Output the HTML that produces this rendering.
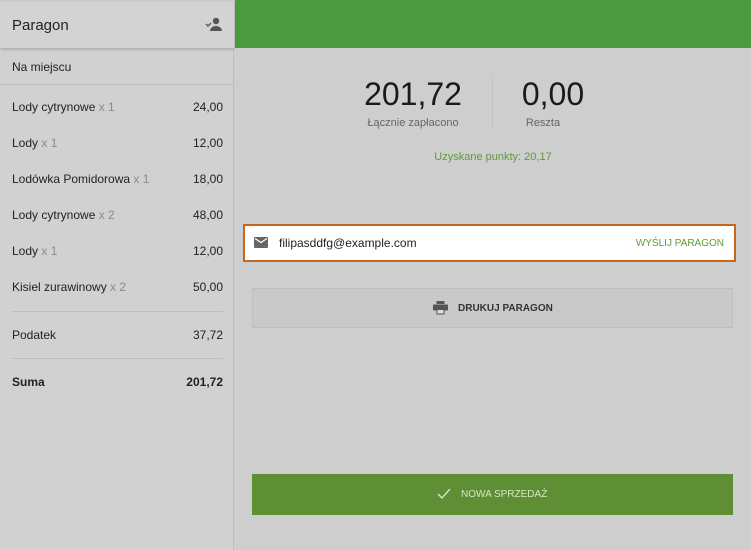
<!DOCTYPE html>
<html><head><meta charset="utf-8"><style>
*{margin:0;padding:0;box-sizing:border-box}
body{width:751px;height:550px;background:#cecece;font-family:"Liberation Sans",sans-serif;position:relative;overflow:hidden;color:#222}
.a{position:absolute}
.left{left:0;top:0;width:234px;height:550px;background:#d1d1d1;border-right:1px solid #bdbdbd}
.hdr{left:0;top:0;width:234px;height:48px;background:#d3d3d3;box-shadow:0 1px 3px rgba(0,0,0,.25);border-top:2px solid #c9c9c9}
.row{left:12px;width:211px;font-size:12px;display:flex;justify-content:space-between;line-height:14px}
.q{color:#8a8a8a}
.hr{left:12px;width:211px;height:1px;background:#bfbfbf}
</style></head><body>
<div class="a left"></div>
<div class="a hdr"></div>
<div class="a" style="left:12px;top:17px;font-size:15px;color:#222">Paragon</div>
<svg class="a" style="left:205px;top:16px" width="18" height="16" viewBox="0 0 18 16"><circle cx="11" cy="5" r="3.2" fill="#555"/><path d="M5 15c0-3 3-5 6-5s6 2 6 5z" fill="#555"/><path d="M1 8l2 2 3-3" stroke="#555" stroke-width="1.4" fill="none"/></svg>
<div class="a" style="left:0;top:84px;width:234px;height:1px;background:#bdbdbd"></div>
<div class="a" style="left:12px;top:60px;font-size:12px">Na miejscu</div>
<div class="a row" style="top:100px"><span>Lody cytrynowe <span class="q">x 1</span></span><span>24,00</span></div>
<div class="a row" style="top:136px"><span>Lody <span class="q">x 1</span></span><span>12,00</span></div>
<div class="a row" style="top:172px"><span>Lodówka Pomidorowa <span class="q">x 1</span></span><span>18,00</span></div>
<div class="a row" style="top:208px"><span>Lody cytrynowe <span class="q">x 2</span></span><span>48,00</span></div>
<div class="a row" style="top:244px"><span>Lody <span class="q">x 1</span></span><span>12,00</span></div>
<div class="a row" style="top:280px"><span>Kisiel zurawinowy <span class="q">x 2</span></span><span>50,00</span></div>
<div class="a hr" style="top:311px"></div>
<div class="a row" style="top:328px"><span>Podatek</span><span>37,72</span></div>
<div class="a hr" style="top:358px"></div>
<div class="a row" style="top:375px;font-weight:bold"><span>Suma</span><span>201,72</span></div>
<div class="a" style="left:235px;top:0;width:516px;height:48px;background:#4c9a3f"></div>
<div class="a" style="left:340px;top:76px;width:146px;text-align:center;font-size:32px;color:#1a1a1a">201,72</div>
<div class="a" style="left:340px;top:117px;width:146px;text-align:center;font-size:11px;color:#666">Łącznie zapłacono</div>
<div class="a" style="left:492px;top:78px;width:1px;height:50px;background:#c0c0c0"></div>
<div class="a" style="left:505px;top:76px;width:96px;text-align:center;font-size:32px;color:#1a1a1a">0,00</div>
<div class="a" style="left:505px;top:117px;width:76px;text-align:center;font-size:11px;color:#666">Reszta</div>
<div class="a" style="left:235px;top:151px;width:516px;text-align:center;font-size:11px;color:#5e9a3c">Uzyskane punkty: 20,17</div>
<div class="a" style="left:243px;top:224px;width:493px;height:38px;background:#fff;border:2px solid #c8671c"></div>
<svg class="a" style="left:254px;top:237px" width="14" height="11" viewBox="0 0 14 11"><rect width="14" height="11" rx="1" fill="#666"/><path d="M1 1.5l6 4 6-4" stroke="#fff" stroke-width="1.2" fill="none"/></svg>
<div class="a" style="left:279px;top:236px;font-size:12px;color:#222">filipasddfg@example.com</div>
<div class="a" style="left:620px;top:238px;width:104px;text-align:right;font-size:10px;color:#5e9a3c">WYŚLIJ PARAGON</div>
<div class="a" style="left:252px;top:288px;width:481px;height:40px;background:#c9c9c9;border:1px solid #bebebe"></div>
<svg class="a" style="left:433px;top:301px" width="15" height="14" viewBox="0 0 15 14"><rect x="3.5" y="0" width="8" height="3" fill="#555"/><rect x="0" y="3.5" width="15" height="6" rx="1" fill="#555"/><rect x="3.5" y="8" width="8" height="5.5" fill="#555"/><rect x="4.5" y="9" width="6" height="3.5" fill="#ddd"/></svg>
<div class="a" style="left:458px;top:303px;font-size:10px;font-weight:bold;color:#333">DRUKUJ PARAGON</div>
<div class="a" style="left:252px;top:474px;width:481px;height:41px;background:#5f8f35"></div>
<svg class="a" style="left:437px;top:488px" width="14" height="12" viewBox="0 0 14 12"><path d="M1 6l4 4 8-9" stroke="#d6e6c8" stroke-width="1.4" fill="none"/></svg>
<div class="a" style="left:461px;top:489px;font-size:10px;color:#d6e6c8">NOWA SPRZEDAŻ</div>
</body></html>
